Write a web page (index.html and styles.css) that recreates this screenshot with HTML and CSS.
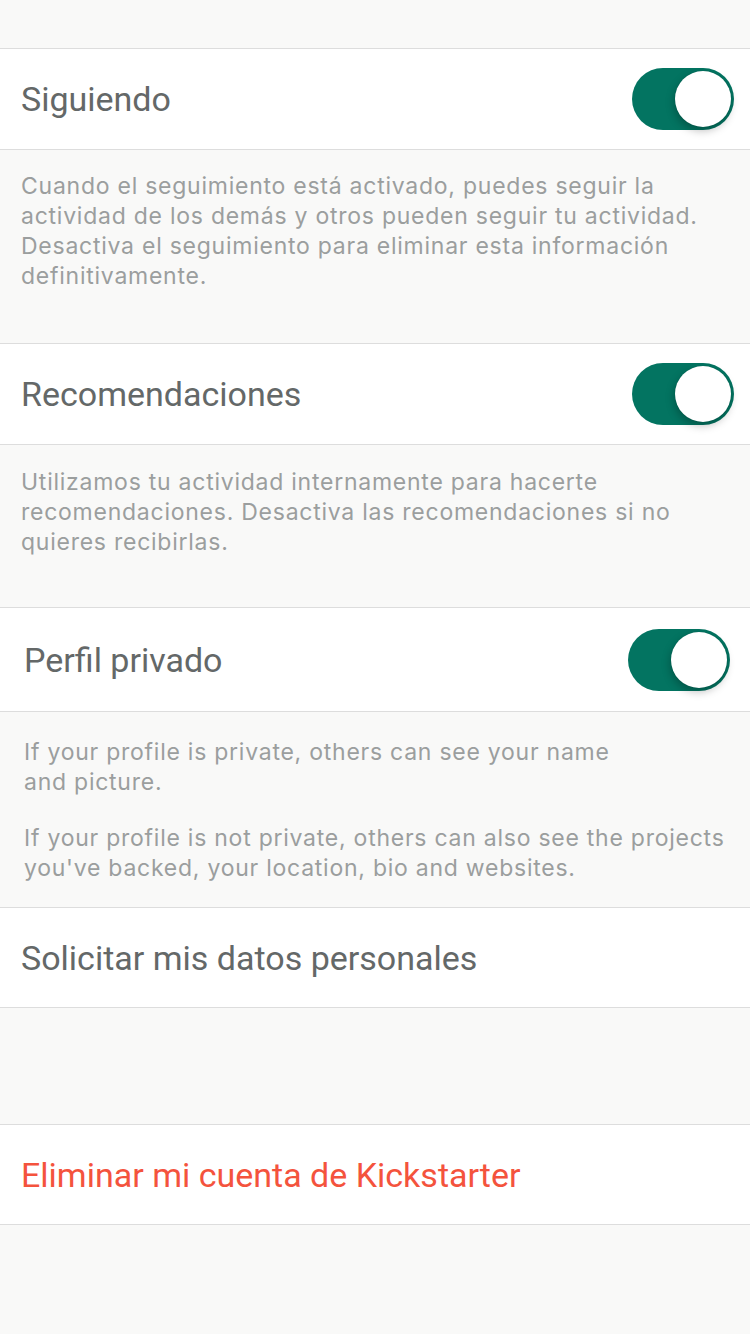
FILE: index.html
```html
<!DOCTYPE html>
<html lang="es">
<head>
<meta charset="utf-8">
<link rel="stylesheet" href="styles.css">
</head>
<body>
<div class="screen">
  <div class="top-gap"></div>

  <div class="row">
    <span class="title">Siguiendo</span>
    <span class="toggle"><span class="knob"></span></span>
  </div>
  <div class="desc desc-1">
    <p>Cuando el seguimiento está activado, puedes seguir la<br>actividad de los demás y otros pueden seguir tu actividad.<br>Desactiva el seguimiento para eliminar esta información<br>definitivamente.</p>
  </div>

  <div class="row">
    <span class="title">Recomendaciones</span>
    <span class="toggle"><span class="knob"></span></span>
  </div>
  <div class="desc desc-2">
    <p>Utilizamos tu actividad internamente para hacerte<br>recomendaciones. Desactiva las recomendaciones si no<br>quieres recibirlas.</p>
  </div>

  <div class="row row-private">
    <span class="title">Perfil privado</span>
    <span class="toggle"><span class="knob"></span></span>
  </div>
  <div class="desc desc-3">
    <p>If your profile is private, others can see your name<br>and picture.</p>
    <p>If your profile is not private, others can also see the projects<br>you've backed, your location, bio and websites.</p>
  </div>

  <div class="row row-plain">
    <span class="title">Solicitar mis datos personales</span>
  </div>
  <div class="gap"></div>
  <div class="row row-plain">
    <span class="title danger">Eliminar mi cuenta de Kickstarter</span>
  </div>
</div>
</body>
</html>
```
FILE: styles.css
```css
* { box-sizing: border-box; }
html, body {
  margin: 0;
  padding: 0;
  background: #f9f9f8;
}
body {
  font-family: "Inter", "Roboto", "Liberation Sans", sans-serif;
  width: 750px;
  height: 1334px;
  overflow: hidden;
}
.screen {
  display: flex;
  flex-direction: column;
}
.top-gap { height: 48px; }
.row {
  display: flex;
  align-items: center;
  justify-content: space-between;
  height: 102px;
  padding: 0 16px 0 21px;
  background: #ffffff;
  border-top: 1px solid #dddddd;
  border-bottom: 1px solid #dddddd;
}
.desc + .row, .gap + .row { margin-top: -1px; }
.row-private {
  height: 105px;
  padding: 0 20px 0 24px;
}
.row-plain { height: 101px; }
.title {
  font-family: "Roboto", "Liberation Sans", sans-serif;
  font-size: 34px;
  color: #646868;
}
.title.danger { color: #f4533d; }
.toggle {
  position: relative;
  width: 102px;
  height: 62px;
  border-radius: 31px;
  background: #037461;
  flex-shrink: 0;
}
.knob {
  position: absolute;
  right: 3px;
  top: 3px;
  width: 56px;
  height: 56px;
  border-radius: 50%;
  background: #ffffff;
  box-shadow: -1px 4px 9px rgba(0, 0, 0, 0.25), 0 0 1px rgba(0,0,0,0.2);
}
.desc {
  padding: 0 10px 0 21px;
  font-size: 23px;
  line-height: 30px;
  color: #9b9e9e;
  letter-spacing: 0.75px;
  white-space: nowrap;
}
.desc p { margin: 0; }
.desc-1 { padding-top: 21px; padding-bottom: 53px; }
.desc-2 { padding-top: 22px; padding-bottom: 51px; }
.desc-3 { padding: 25px 10px 25px 24px; }
.desc-3 p + p { margin-top: 26px; }
.gap { height: 117px; }
```
